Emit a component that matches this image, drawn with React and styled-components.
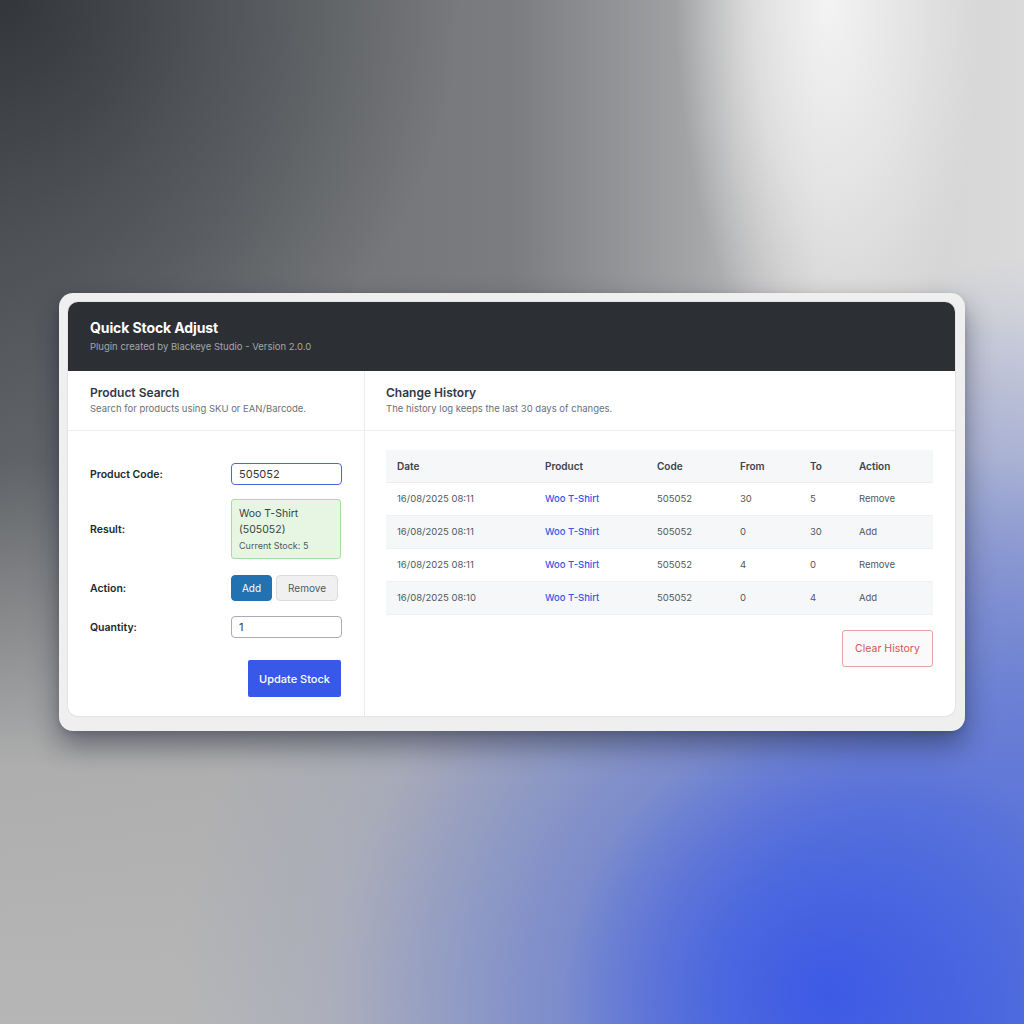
import React from "react";
import styled, { createGlobalStyle } from "styled-components";

const Global = createGlobalStyle`
  html, body { margin: 0; padding: 0; }
  body {
    font-family: Inter, "Noto Sans", "Liberation Sans", sans-serif;
    background: #9a9a9a;
  }
`;

const Stage = styled.div`
  min-height: 100vh;
  display: flex;
  align-items: center;
  justify-content: center;
  background:
    radial-gradient(ellipse 26% 26% at 81% 97%, rgba(59,89,230,0.95) 0%, rgba(62,92,228,0.5) 50%, rgba(80,105,222,0) 100%),
    radial-gradient(ellipse 75% 70% at 92% 100%, rgba(78,106,222,0.97) 0%, rgba(88,114,218,0.9) 30%, rgba(110,130,210,0.7) 55%, rgba(150,160,200,0.3) 80%, rgba(170,172,190,0) 100%),
    radial-gradient(ellipse 30% 45% at 100% 70%, rgba(110,130,215,0.8) 0%, rgba(120,135,205,0) 100%),
    radial-gradient(ellipse 15% 38% at 81% 0%, #f3f3f3 0%, rgba(236,236,236,0.7) 50%, rgba(225,225,225,0) 100%),
    radial-gradient(ellipse 45% 45% at 0% 0%, #33373c 0%, rgba(60,64,68,0.6) 45%, rgba(100,102,105,0) 100%),
    linear-gradient(180deg, rgba(182,182,182,0) 0%, rgba(182,182,182,0) 45%, rgba(182,182,182,0.9) 75%, #b6b6b6 100%),
    linear-gradient(90deg, #5f6266 0%, #727477 30%, #7b7c7f 50%, #a4a5a7 68%, #cfcfcf 80%, #dadada 100%);
`;

const Frame = styled.div`
  width: 906px;
  box-sizing: border-box;
  padding: 9px 10px 15px 9px;
  background: #efefef;
  border-radius: 14px;
  box-shadow: 0 14px 28px rgba(20, 25, 45, 0.45), 0 2px 6px rgba(0,0,0,0.12);
`;

const Card = styled.div`
  background: #fff;
  border-radius: 10px;
  overflow: hidden;
  box-shadow: 0 0 0 1px #e4e4e4;
`;

const Header = styled.div`
  background: #2c3034;
  height: 69px;
  box-sizing: border-box;
  padding: 17px 22px 0;
`;

const Title = styled.h1`
  margin: 0;
  color: #fff;
  font-size: 14px;
  font-weight: 700;
  line-height: 18px;
  letter-spacing: -0.1px;
`;

const Subtitle = styled.div`
  margin-top: 4px;
  color: #a3a7ab;
  font-size: 9.5px;
  line-height: 12px;
`;

const Columns = styled.div`
  display: grid;
  grid-template-columns: 296px 1fr;
  height: 345px;
`;

const Column = styled.section`
  display: flex;
  flex-direction: column;
  border-left: ${(p) => (p.$divided ? "1px solid #ececec" : "none")};
`;

const SectionHead = styled.div`
  height: 60px;
  box-sizing: border-box;
  padding: 14px 22px 0 ${(p) => (p.$inset ? 21 : 22)}px;
  border-bottom: 1px solid #eeeeee;
`;

const SectionTitle = styled.h2`
  margin: 0;
  font-size: 12px;
  font-weight: 600;
  color: #2f3a48;
  line-height: 16px;
`;

const SectionDesc = styled.div`
  margin-top: 2px;
  font-size: 9.5px;
  color: #6b7178;
  line-height: 12px;
`;

const FormGrid = styled.div`
  display: grid;
  grid-template-columns: 141px 111px;
  align-items: center;
  padding: 32px 22px 0;
`;

const Label = styled.div`
  font-size: 10.5px;
  font-weight: 600;
  color: #23282d;
  margin-bottom: ${(p) => p.$mb || 0}px;
`;

const Field = styled.div`
  margin-bottom: ${(p) => p.$mb || 0}px;
`;

const Input = styled.div`
  height: 22px;
  box-sizing: border-box;
  border: ${(p) => (p.$focus ? "1.5px solid #5266d8" : "1px solid #a9acb0")};
  border-radius: 4px;
  padding: 0 7px;
  display: flex;
  align-items: center;
  font-size: 11px;
  color: #32373c;
  background: #fff;
`;

const ResultBox = styled.div`
  width: 110px;
  height: 60px;
  box-sizing: border-box;
  background: #e6f6e3;
  border: 1px solid #a9dca3;
  border-radius: 3px;
  padding: 6px 7px 0;
`;

const ResultName = styled.div`
  font-size: 10.5px;
  color: #3a3f44;
  line-height: 16px;
`;

const ResultStock = styled.div`
  font-size: 9px;
  color: #50575e;
  margin-top: 2px;
`;

const ButtonRow = styled.div`
  display: flex;
  gap: 4px;
`;

const Toggle = styled.button`
  height: 26px;
  width: ${(p) => (p.$active ? 41 : 62)}px;
  padding: 0;
  font-family: inherit;
  font-size: 10px;
  border-radius: 4px;
  border: 1px solid ${(p) => (p.$active ? "#2271b1" : "#dcdcde")};
  background: ${(p) => (p.$active ? "#2271b1" : "#f0f0f1")};
  color: ${(p) => (p.$active ? "#fff" : "#50575e")};
  cursor: pointer;
`;

const SubmitRow = styled.div`
  grid-column: 1 / span 2;
  display: flex;
  justify-content: flex-end;
  padding-right: 1px;
`;

const Primary = styled.button`
  width: 93px;
  height: 37px;
  border: none;
  border-radius: 2px;
  background: #3858e9;
  color: #fff;
  font-family: inherit;
  font-size: 11px;
  font-weight: 500;
  cursor: pointer;
`;

const TableWrap = styled.div`
  padding: 19px 22px 0 21px;
  display: flex;
  flex-direction: column;
  align-items: flex-end;
`;

const Table = styled.table`
  width: 100%;
  table-layout: fixed;
  border-collapse: collapse;
  font-size: 9.5px;
`;

const Th = styled.th`
  box-sizing: border-box;
  text-align: left;
  font-weight: 600;
  color: #3c434a;
  font-size: 10px;
  height: 32px;
  padding: 0 0 0 11px;
  background: #f6f7f8;
  border-bottom: 1px solid #eceef0;
  width: ${(p) => p.$w}px;
`;

const Tr = styled.tr`
  background: ${(p) => (p.$alt ? "#f6f7f8" : "#fff")};
`;

const Td = styled.td`
  height: 32px;
  padding: 0 0 0 11px;
  color: #50575e;
  border-bottom: 1px solid #eef0f2;
`;

const ProductLink = styled.a`
  color: #3858e9;
  font-weight: 500;
  text-decoration: none;
`;

const Danger = styled.button`
  margin-top: 15px;
  width: 91px;
  height: 37px;
  border: 1px solid #e3a4a2;
  border-radius: 3px;
  background: #fafafa;
  color: #d9534f;
  font-family: inherit;
  font-size: 10.5px;
  cursor: pointer;
`;

const rows = [
  ["16/08/2025 08:11", "Woo T-Shirt", "505052", "30", "5", "Remove"],
  ["16/08/2025 08:11", "Woo T-Shirt", "505052", "0", "30", "Add"],
  ["16/08/2025 08:11", "Woo T-Shirt", "505052", "4", "0", "Remove"],
  ["16/08/2025 08:10", "Woo T-Shirt", "505052", "0", "4", "Add"],
];

const cols = [
  ["Date", 148],
  ["Product", 112],
  ["Code", 83],
  ["From", 70],
  ["To", 49],
  ["Action", 85],
];

export default function App() {
  return (
    <>
      <Global />
      <Stage>
        <Frame>
          <Card>
            <Header>
              <Title>Quick Stock Adjust</Title>
              <Subtitle>Plugin created by Blackeye Studio - Version 2.0.0</Subtitle>
            </Header>
            <Columns>
              <Column>
                <SectionHead>
                  <SectionTitle>Product Search</SectionTitle>
                  <SectionDesc>Search for products using SKU or EAN/Barcode.</SectionDesc>
                </SectionHead>
                <FormGrid>
                  <Label $mb={14}>Product Code:</Label>
                  <Field $mb={14}>
                    <Input $focus>505052</Input>
                  </Field>
                  <Label $mb={16}>Result:</Label>
                  <Field $mb={16}>
                    <ResultBox>
                      <ResultName>Woo T-Shirt<br />(505052)</ResultName>
                      <ResultStock>Current Stock: 5</ResultStock>
                    </ResultBox>
                  </Field>
                  <Label $mb={15}>Action:</Label>
                  <Field $mb={15}>
                    <ButtonRow>
                      <Toggle $active>Add</Toggle>
                      <Toggle>Remove</Toggle>
                    </ButtonRow>
                  </Field>
                  <Label $mb={22}>Quantity:</Label>
                  <Field $mb={22}>
                    <Input>1</Input>
                  </Field>
                  <SubmitRow>
                    <Primary>Update Stock</Primary>
                  </SubmitRow>
                </FormGrid>
              </Column>
              <Column $divided>
                <SectionHead $inset>
                  <SectionTitle>Change History</SectionTitle>
                  <SectionDesc>The history log keeps the last 30 days of changes.</SectionDesc>
                </SectionHead>
                <TableWrap>
                  <Table>
                    <thead>
                      <tr>
                        {cols.map(([c, w]) => (
                          <Th key={c} $w={w}>{c}</Th>
                        ))}
                      </tr>
                    </thead>
                    <tbody>
                      {rows.map((r, i) => (
                        <Tr key={i} $alt={i % 2 === 1}>
                          <Td>{r[0]}</Td>
                          <Td><ProductLink href="#">{r[1]}</ProductLink></Td>
                          <Td>{r[2]}</Td>
                          <Td>{r[3]}</Td>
                          <Td>{r[4]}</Td>
                          <Td>{r[5]}</Td>
                        </Tr>
                      ))}
                    </tbody>
                  </Table>
                  <Danger>Clear History</Danger>
                </TableWrap>
              </Column>
            </Columns>
          </Card>
        </Frame>
      </Stage>
    </>
  );
}
